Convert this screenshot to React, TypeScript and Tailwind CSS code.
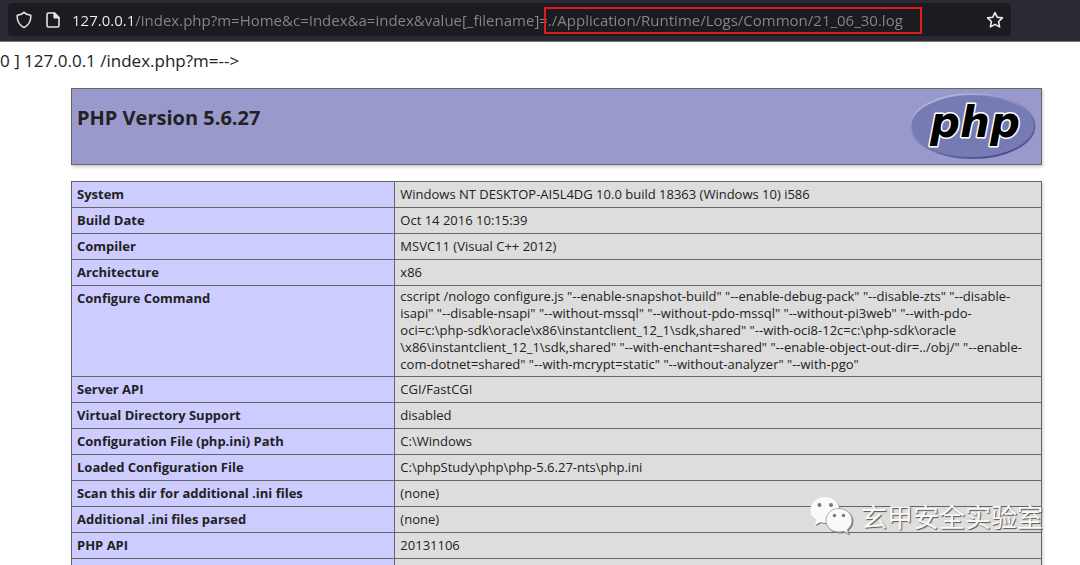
import React from 'react'

type Row = {
    label: string;
    value: string;
};

const rows: Row[] = [
    { label: 'System', value: 'Windows NT DESKTOP-AI5L4DG 10.0 build 18363 (Windows 10) i586' },
    { label: 'Build Date', value: 'Oct 14 2016 10:15:39' },
    { label: 'Compiler', value: 'MSVC11 (Visual C++ 2012)' },
    { label: 'Architecture', value: 'x86' },
    {
        label: 'Configure Command',
        value: [
            'cscript /nologo configure.js "--enable-snapshot-build" "--enable-debug-pack" "--disable-zts" "--disable-',
            'isapi" "--disable-nsapi" "--without-mssql" "--without-pdo-mssql" "--without-pi3web" "--with-pdo-',
            'oci=c:\\php-sdk\\oracle\\x86\\instantclient_12_1\\sdk,shared" "--with-oci8-12c=c:\\php-sdk\\oracle',
            '\\x86\\instantclient_12_1\\sdk,shared" "--with-enchant=shared" "--enable-object-out-dir=../obj/" "--enable-',
            'com-dotnet=shared" "--with-mcrypt=static" "--without-analyzer" "--with-pgo"',
        ].join('\n'),
    },
    { label: 'Server API', value: 'CGI/FastCGI' },
    { label: 'Virtual Directory Support', value: 'disabled' },
    { label: 'Configuration File (php.ini) Path', value: 'C:\\Windows' },
    { label: 'Loaded Configuration File', value: 'C:\\phpStudy\\php\\php-5.6.27-nts\\php.ini' },
    { label: 'Scan this dir for additional .ini files', value: '(none)' },
    { label: 'Additional .ini files parsed', value: '(none)' },
    { label: 'PHP API', value: '20131106' },
    { label: '', value: '' },
];

function AddressBar() {
    return (
        <header className="h-[42px] bg-[#2b2a33] border-b border-[#77767c] pl-2 pr-[69px] pt-[3px]">
            <div className="relative h-[33px] rounded bg-[#1c1b22] flex items-center pl-2 pr-[7px]">
                <button aria-label="Tracking protection" className="w-4 h-[18px] shrink-0">
                    <svg viewBox="0 0 16 18" className="w-4 h-[18px]" fill="none" stroke="#e4e4e7" strokeWidth="1.5" strokeLinejoin="round">
                        <path d="M8 1.2 C6.600 2.900 4 3.900 1.200 4.200 C0.900 9.600 2.600 13.800 8 16.600 C13.400 13.800 15.100 9.600 14.800 4.200 C12 3.900 9.400 2.900 8 1.2 Z" />
                    </svg>
                </button>
                <button aria-label="Site information" className="w-[14px] h-4 ml-[14px] shrink-0">
                    <svg viewBox="0 0 14 16" className="w-[14px] h-4" fill="none" stroke="#e4e4e7" strokeWidth="1.6" strokeLinejoin="round">
                        <path d="M8.5 1 H2.5 Q1 1 1 2.5 V13.5 Q1 15 2.5 15 H11.5 Q13 15 13 13.5 V5.5 Z" />
                        <path d="M8.2 1 V5.8 H13 Z" fill="#e4e4e7" />
                    </svg>
                </button>
                {/* host is bright, the rest of the address is dimmed */}
                <input
                    type="text"
                    aria-label="Address"
                    defaultValue="127.0.0.1/index.php?m=Home&c=Index&a=index&value[_filename]=./Application/Runtime/Logs/Common/21_06_30.log"
                    className="flex-1 min-w-0 ml-3 h-6 text-[15px] outline-none text-transparent bg-clip-text bg-[linear-gradient(90deg,#f4f4f6_60px,#88878d_60px)]"
                />
                <button aria-label="Bookmark this page" className="w-[18px] h-[18px] ml-3 shrink-0">
                    <svg viewBox="0 0 18 18" className="w-[18px] h-[18px]" fill="none" stroke="#f0f0f3" strokeWidth="1.6" strokeLinejoin="round">
                        <path d="M9 1.5 L11.2 6.2 L16.4 6.9 L12.6 10.5 L13.6 15.9 L9 13.4 L4.4 15.9 L5.4 10.5 L1.6 6.9 L6.8 6.2 Z" />
                    </svg>
                </button>
                <div className="absolute left-[536px] top-1 w-[378px] h-[27px] border-2 border-solid border-[#e01b22] pointer-events-none"></div>
            </div>
        </header>
    );
}

function PhpLogo() {
    return (
        <svg viewBox="0 0 126 68" className="w-[126px] h-[68px] shrink-0" role="img" aria-label="PHP logo">
            <defs>
                <linearGradient id="rim" x1="0.2" y1="0" x2="0.8" y2="1">
                    <stop offset="0" stopColor="#b9badd" />
                    <stop offset="0.45" stopColor="#8286bb" />
                    <stop offset="1" stopColor="#454590" />
                </linearGradient>
            </defs>
            <ellipse cx="62.500" cy="33" rx="62" ry="32" fill="#777bb3" stroke="url(#rim)" strokeWidth="1.8" />
            <text
                x="20"
                y="43.500"
                fontFamily="DejaVu Sans, Verdana, sans-serif"
                fontWeight="bold"
                fontStyle="italic"
                fontSize="42"
                fill="#000"
                stroke="#fff"
                strokeWidth="3"
                strokeLinejoin="round"
                paintOrder="stroke"
            >
                php
            </text>
        </svg>
    );
}

function Watermark() {
    return (
        <div className="absolute left-[809px] top-[496px] flex items-center gap-2 pointer-events-none">
            <svg viewBox="0 0 44 40" className="w-11 h-10 drop-shadow-[1px_1px_0px_#777]">
                <path d="M16 1 C7.500 1 1.500 6.800 1.500 14 C1.500 18.300 3.700 22 7.400 24.400 L6 29 L11.400 26.300 C13 26.700 14.500 27 16 27 C24.500 27 30.500 21.200 30.500 14 C30.500 6.800 24.500 1 16 1 Z" fill="#fafafa" />
                <circle cx="10.500" cy="9" r="2" fill="#777" />
                <circle cx="22" cy="9" r="2" fill="#777" />
                <path d="M30 12.500 C22.500 12.500 17 17.800 17 24.300 C17 31 22.500 36 30 36 C31.600 36 33.200 35.700 34.700 35.200 L39.500 37.800 L38.300 33.500 C41.200 31.300 43 28 43 24.300 C43 17.800 37.500 12.500 30 12.500 Z" fill="#fafafa" stroke="#999" strokeWidth="0.800" />
                <circle cx="25.500" cy="19.500" r="1.700" fill="#777" />
                <circle cx="34.500" cy="19.500" r="1.700" fill="#777" />
            </svg>
            <span className="font-['Noto_Sans_CJK_SC',sans-serif] text-[26px] leading-10 text-[#fafafa] whitespace-nowrap [text-shadow:1px_1px_1px_#555]">
                玄甲安全实验室
            </span>
        </div>
    );
}

export default function App() {
    return (
        <div className="relative h-screen overflow-hidden bg-white text-[#222] font-['Open_Sans','Noto_Sans',sans-serif]">
            <AddressBar />
            <p className="mt-[7px] text-[17px] leading-6">0 ] 127.0.0.1 /index.php?m=--&gt;</p>
            <main className="pl-[71px] pr-[38px] mt-[15px]">
                <div className="h-[77px] flex justify-between border border-[#666] bg-[#9999cc] shadow-[1px_2px_3px_#ccc] px-[5px] pt-1">
                    <h1 className="text-[20px] leading-6 font-bold mt-[13px]">PHP Version 5.6.27</h1>
                    <PhpLogo />
                </div>
                <table className="w-full mt-4 border-collapse table-fixed text-[13px] leading-[17px] shadow-[1px_2px_3px_#ccc]">
                    <tbody>
                        {rows.map((row) => (
                            <tr key={row.label} className="h-[26px]">
                                <th scope="row" className="w-1/3 border border-[#666] bg-[#ccccff] px-[5px] pt-1 text-left align-top font-bold">{row.label}</th>
                                <td className="border border-[#666] bg-[#dddddd] px-[5px] pt-[2px] pb-[3px] align-middle whitespace-pre">{row.value}</td>
                            </tr>
                        ))}
                    </tbody>
                </table>
            </main>
            <Watermark />
        </div>
    );
}
